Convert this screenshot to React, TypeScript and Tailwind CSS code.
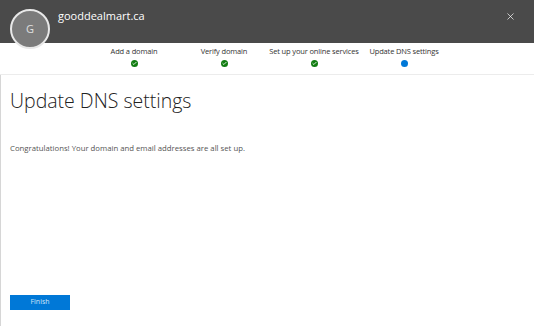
import { X, Check } from 'lucide-react';

const steps = [
    { label: 'Add a domain', done: true },
    { label: 'Verify domain', done: true },
    { label: 'Set up your online services', done: true },
    { label: 'Update DNS settings', done: false },
];

export default function App() {
    return (
        <div className="flex h-[326px] w-[534px] flex-col bg-white font-['Open_Sans',sans-serif]">
            {/* Header */}
            <div className="relative flex h-[43px] shrink-0 items-start justify-between bg-[#4a4a4a] pl-[58px] pr-[18px] pt-[8px]">
                <span className="text-[11px] text-white">gooddealmart.ca</span>
                <X className="mt-[3px] h-[11px] w-[11px] text-white" strokeWidth={1.5} />
                {/* Avatar */}
                <div className="absolute left-[10px] top-[9px] flex h-[40px] w-[40px] items-center justify-center rounded-full border-2 border-[#e8e8e8] bg-[#7b7b7b] text-[11px] text-[#e0e0e0]">
                    G
                </div>
            </div>

            {/* Steps */}
            <div className="flex h-[32px] shrink-0 items-start border-b border-[#ececec] pl-[89px] pt-[3px]">
                {steps.map((s) => (
                    <div key={s.label} className="flex w-[90px] flex-col items-center gap-[3px]">
                        <span className="whitespace-nowrap text-[7.5px] leading-[11px] tracking-[-0.15px] text-[#333]">
                            {s.label}
                        </span>
                        {s.done ? (
                            <span className="flex h-[7px] w-[7px] items-center justify-center rounded-full bg-[#107c10]">
                                <Check className="h-[5px] w-[5px] text-white" strokeWidth={4} />
                            </span>
                        ) : (
                            <span className="h-[7px] w-[7px] rounded-full bg-[#0078d7]" />
                        )}
                    </div>
                ))}
            </div>

            {/* Body */}
            <div className="flex flex-1 flex-col border-l border-[#d6d6d6] px-[9px]">
                <h1 className="mt-[12px] text-[19.5px] font-light leading-[28px] text-[#222]">Update DNS settings</h1>
                <p className="mt-[28px] text-[7.75px] text-[#555]">
                    Congratulations! Your domain and email addresses are all set up.
                </p>
                <div className="mt-auto mb-[16px]">
                    <button className="h-[15px] w-[60px] bg-[#0078d7] text-[7px] text-[#cfe4f7]">Finish</button>
                </div>
            </div>
        </div>
    );
}
